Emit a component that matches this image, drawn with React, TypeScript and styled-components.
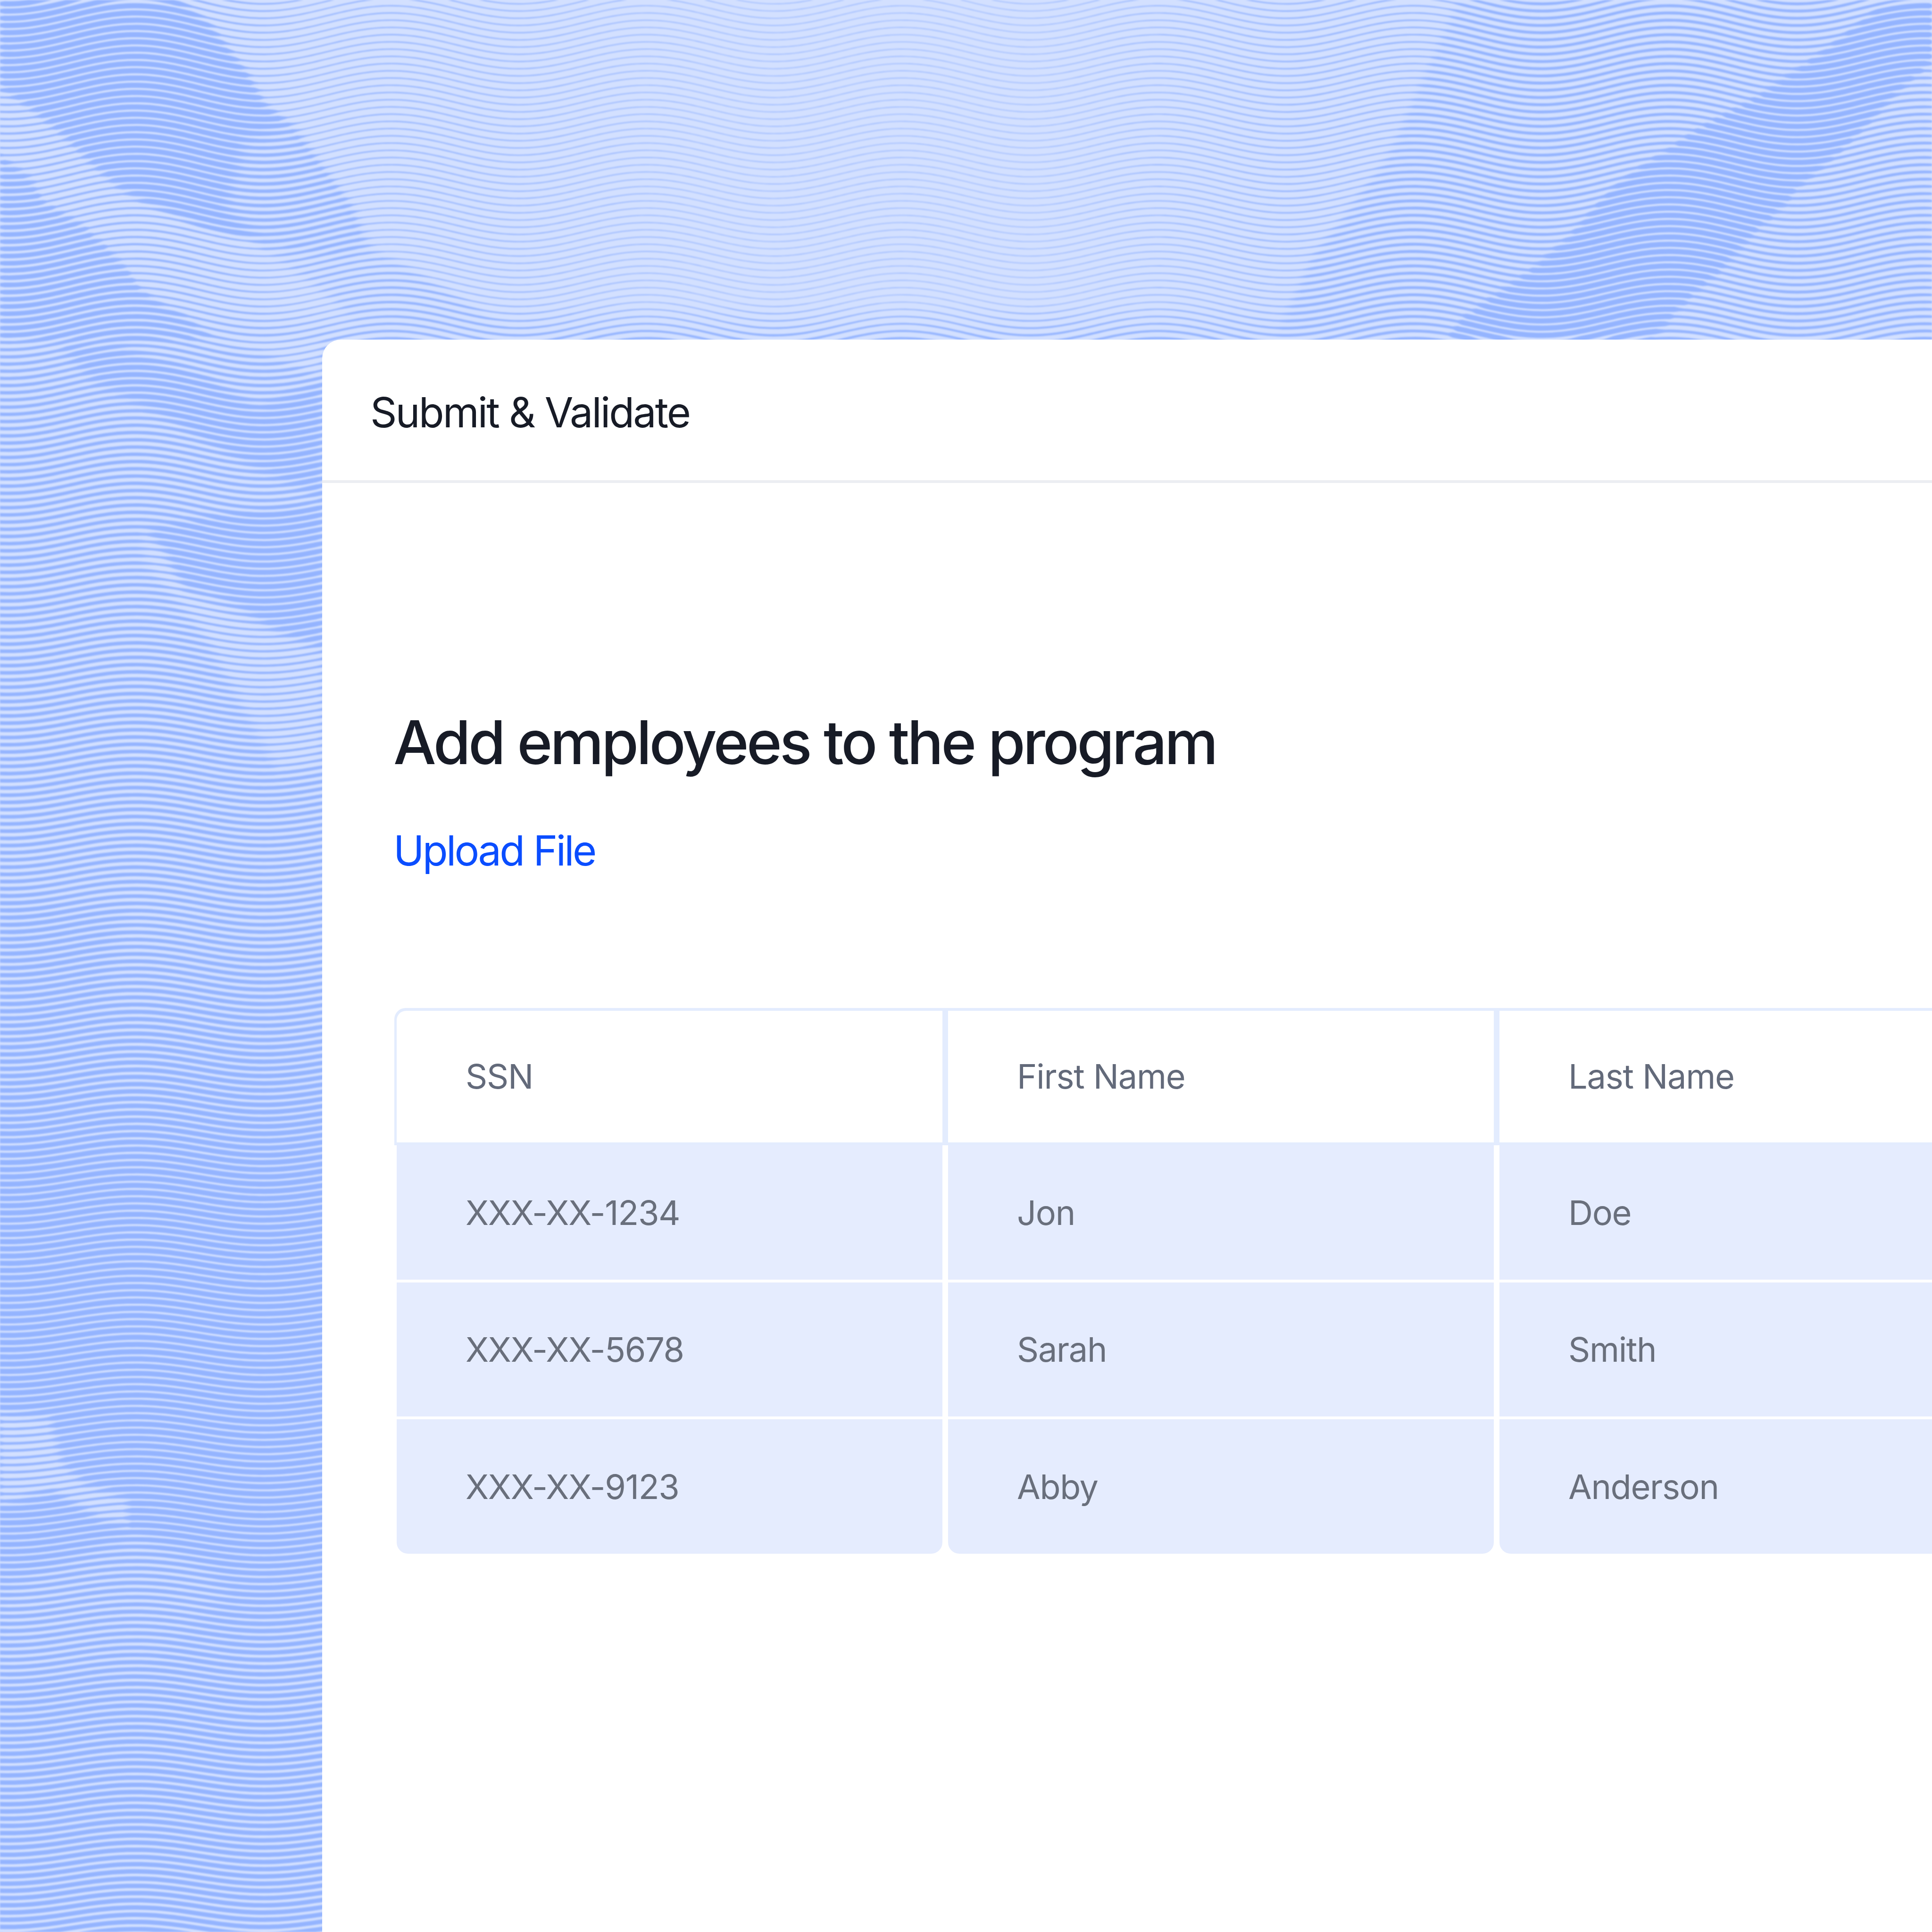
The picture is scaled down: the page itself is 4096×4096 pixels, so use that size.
import React from "react";
import styled, { createGlobalStyle } from "styled-components";

type Pt = [number, number];
type Patch = { pts: Pt[]; d: number; soft: number };

const LINE_GAP = 15.3;
const LINE_OFFSET = 2.5;
const PERIOD = 542;
const TROUGH = 558;

const patches: Patch[] = [
  { pts: [[3093,0],[3041,115],[2988,230],[2949,321],[2884,413],[2832,482],[2779,551],[2753,610],[2701,720],[4096,720],[4096,0]], d: 0.4, soft: 18 },
  { pts: [[4096,0],[3981,18],[3876,101],[3710,215],[3608,269],[3544,311],[3468,361],[3418,399],[3322,506],[3278,544],[3227,587],[3164,629],[3100,675],[3070,720],[3506,720],[3544,671],[3589,625],[3659,564],[3716,495],[3773,445],[3811,399],[3913,311],[4008,211],[4096,130]], d: 0.72, soft: 5 },
  { pts: [[562,528],[770,519],[836,551],[993,643],[1084,703],[1084,720],[784,720],[705,634]], d: 0.34, soft: 18 },
  { pts: [[0,0],[379,0],[444,50],[522,151],[562,220],[614,262],[692,367],[744,441],[770,514],[731,537],[562,514],[431,482],[300,427],[248,395],[196,349],[131,285],[65,230],[0,188]], d: 0.72, soft: 12 },
  { pts: [[520,300],[614,262],[692,367],[744,441],[780,520],[731,545],[562,522],[480,440]], d: 0.48, soft: 34 },
  { pts: [[0,330],[65,376],[91,427],[170,473],[235,532],[274,578],[300,615],[340,643],[392,670],[457,722],[0,722]], d: 0.64, soft: 8 },
  { pts: [[126,732],[244,732],[436,798],[545,863],[683,808],[683,1058],[545,993],[349,884],[196,808]], d: 0.68, soft: 22 },
  { pts: [[305,1123],[458,1090],[683,1069],[683,1372],[589,1340],[510,1285],[445,1253],[392,1253],[344,1166]], d: 0.7, soft: 14 },
  { pts: [[305,1123],[344,1166],[392,1253],[510,1307],[683,1383],[683,1621],[589,1632],[523,1513],[436,1350],[305,1188]], d: 0.32, soft: 24 },
  { pts: [[414,720],[683,720],[683,798],[545,743]], d: 0.26, soft: 16 },
  { pts: [[0,1900],[260,1930],[200,2150],[0,2270]], d: 0.6, soft: 50 },
  { pts: [[0,2995],[105,3006],[131,3103],[183,3147],[270,3179],[270,3233],[218,3222],[109,3157],[0,3190]], d: 0.36, soft: 20 },
  { pts: [[283,3255],[436,3320],[480,3375],[305,3536],[0,3536],[0,3374]], d: 0.56, soft: 40 },
];

const lerpTable = (table: Pt[], v: number) => {
  if (v <= table[0][0]) return table[0][1];
  for (let i = 1; i < table.length; i++) {
    if (v <= table[i][0]) {
      const [a, av] = table[i - 1];
      const [b, bv] = table[i];
      return av + ((bv - av) * (v - a)) / (b - a);
    }
  }
  return table[table.length - 1][1];
};

const topBase: Pt[] = [[0,0.3],[400,0.3],[650,0.18],[1000,0.17],[1500,0.11],[2200,0.1],[2750,0.2],[4096,0.24]];
const stripBase: Pt[] = [[720,0.45],[1500,0.5],[2000,0.52],[2300,0.62],[2500,0.72],[3250,0.72],[3500,0.6],[3750,0.62],[4096,0.62]];
const ampTable: Pt[] = [[0,21],[700,20],[1500,16],[3000,13],[4096,13]];

const signedDistance = (x: number, y: number, pts: Pt[]) => {
  let inside = false;
  let min = Infinity;
  for (let i = 0, j = pts.length - 1; i < pts.length; j = i++) {
    const [xi, yi] = pts[i];
    const [xj, yj] = pts[j];
    if (yi > y !== yj > y && x < ((xj - xi) * (y - yi)) / (yj - yi) + xi) inside = !inside;
    const dx = xj - xi;
    const dy = yj - yi;
    const t = Math.max(0, Math.min(1, ((x - xi) * dx + (y - yi) * dy) / (dx * dx + dy * dy)));
    min = Math.min(min, Math.hypot(x - xi - t * dx, y - yi - t * dy));
  }
  return inside ? min : -min;
};

const density = (x: number, y: number) => {
  const mix = Math.max(0, Math.min(1, (y - 640) / 120));
  let d = lerpTable(topBase, x) * (1 - mix) + lerpTable(stripBase, y) * mix;
  for (const p of patches) {
    const a = Math.max(0, Math.min(1, 0.5 + signedDistance(x, y, p.pts) / p.soft));
    if (a > 0) d = d * (1 - a) + p.d * a;
  }
  return d;
};

const buildWaves = () => {
  const parts: string[] = [];
  const step = 10;
  for (let k = -2; k * LINE_GAP + LINE_OFFSET < 4140; k++) {
    const base = k * LINE_GAP + LINE_OFFSET;
    const amp = lerpTable(ampTable, base);
    const xEnd = base > 780 ? 700 : 4100;
    const upper: string[] = [];
    const lower: string[] = [];
    for (let x = 0; x <= xEnd; x += step) {
      const yc = base + amp * Math.cos((2 * Math.PI * (x - TROUGH)) / PERIOD);
      const half = (density(x, yc) * LINE_GAP) / 2;
      upper.push(`${x} ${(yc - half).toFixed(1)}`);
      lower.unshift(`${x} ${(yc + half).toFixed(1)}`);
    }
    parts.push(`M${upper.join("L")}L${lower.join("L")}Z`);
  }
  return parts.join("");
};

const wavePath = buildWaves();

const Global = createGlobalStyle`
  html, body { margin: 0; padding: 0; background: #fff; }
  body { font-family: "Inter", "Liberation Sans", sans-serif; }
`;

const Page = styled.div`
  position: relative;
  width: 4096px;
  height: 4096px;
  overflow: hidden;
  background: #d3e0ff;
  padding: 720px 0 0 683px;
  box-sizing: border-box;
`;

const Backdrop = styled.svg`
  position: absolute;
  inset: 0;
  width: 4096px;
  height: 4096px;
  filter: blur(1.6px);
`;

const Card = styled.section`
  position: relative;
  width: 3800px;
  height: 3800px;
  background: #fff;
  border-radius: 40px;
`;

const CardHeader = styled.header`
  box-sizing: content-box;
  height: 288px;
  padding: 10px 0 0 102px;
  border-bottom: 6px solid #eceef2;
  display: flex;
  align-items: center;
  font-size: 88px;
  letter-spacing: -2.9px;
  color: #171b26;
`;

const CardBody = styled.div`
  padding: 0 0 0 153px;
`;

const Title = styled.h1`
  margin: 470px 0 0 -2px;
  font-size: 128px;
  line-height: 160px;
  font-weight: 500;
  letter-spacing: -5px;
  color: #171b26;
`;

const UploadLink = styled.a`
  display: block;
  margin: 94px 0 0 -2px;
  font-size: 88px;
  line-height: 110px;
  letter-spacing: -3.7px;
  color: #0a4dff;
`;

const Table = styled.div`
  margin-top: 279px;
`;

const HeadRow = styled.div`
  display: grid;
  grid-template-columns: repeat(3, 1157px);
  column-gap: 12px;
  width: 3600px;
  padding: 6px 0 6px 5px;
  background: #e3ecfe;
  border-radius: 24px 24px 0 0;
`;

const HeadCell = styled.div<{ $first?: boolean }>`
  box-sizing: border-box;
  height: 279px;
  display: flex;
  align-items: center;
  padding: 0 0 3px 146px;
  font-size: 72px;
  letter-spacing: -1.2px;
  color: #636a7a;
  background: #fff;
  border-top-left-radius: ${(p) => (p.$first ? "20px" : "0")};
`;

const BodyGrid = styled.div`
  display: grid;
  grid-template-columns: repeat(3, 1157px);
  column-gap: 12px;
  row-gap: 6px;
  padding-left: 5px;
`;

const BodyCell = styled.div<{ $last?: boolean }>`
  height: 284.67px;
  display: flex;
  align-items: center;
  padding-left: 146px;
  font-size: 72px;
  letter-spacing: -1.3px;
  color: #696f7c;
  background: #e5ecfe;
  border-radius: ${(p) => (p.$last ? "0 0 24px 24px" : "0")};
`;

const columns = ["SSN", "First Name", "Last Name"];
const rows = [
  ["XXX-XX-1234", "Jon", "Doe"],
  ["XXX-XX-5678", "Sarah", "Smith"],
  ["XXX-XX-9123", "Abby", "Anderson"],
];

export default function App() {
  return (
    <>
      <Global />
      <Page>
        <Backdrop viewBox="0 0 4096 4096" aria-hidden="true">
          <path d={wavePath} fill="#94b4ff" />
        </Backdrop>
        <Card>
          <CardHeader>Submit &amp; Validate</CardHeader>
          <CardBody>
            <Title>Add employees to the program</Title>
            <UploadLink>Upload File</UploadLink>
            <Table>
              <HeadRow>
                {columns.map((c, i) => (
                  <HeadCell key={c} $first={i === 0}>{c}</HeadCell>
                ))}
              </HeadRow>
              <BodyGrid>
                {rows.flatMap((row, r) =>
                  row.map((cell) => (
                    <BodyCell key={cell} $last={r === rows.length - 1}>{cell}</BodyCell>
                  ))
                )}
              </BodyGrid>
            </Table>
          </CardBody>
        </Card>
      </Page>
    </>
  );
}
